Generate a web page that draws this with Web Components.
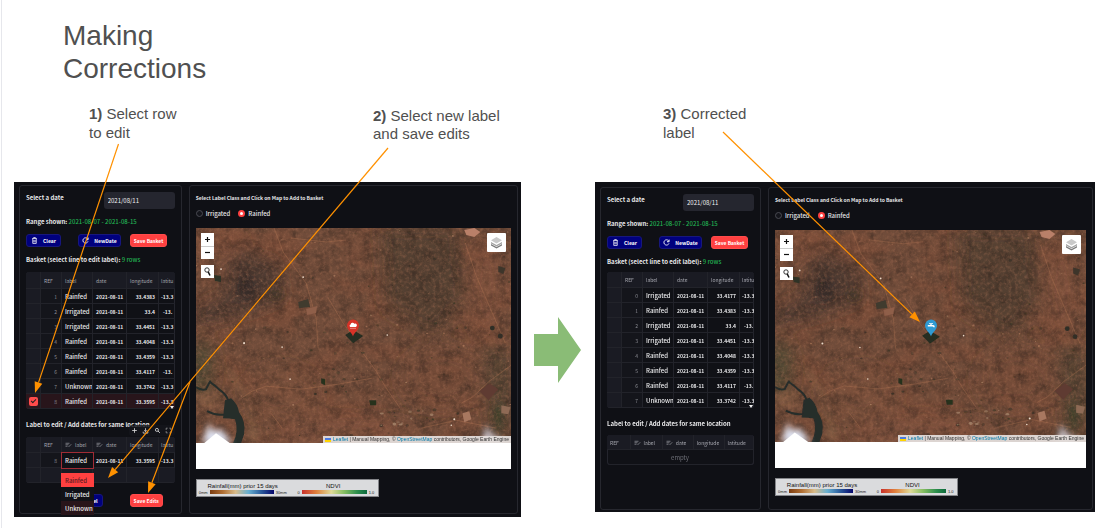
<!DOCTYPE html>
<html lang="en">
<head>
<meta charset="utf-8">
<title>Making Corrections</title>
<style>
  body { margin: 0; background: #fff; font-family: "Liberation Sans", Arial, sans-serif; }
</style>
</head>
<body>
<slide-page>
  <span slot="title">Making Corrections</span>
  <slide-note slot="notes"><b>1)</b> <span>Select row</span><br><span>to edit</span></slide-note>
  <slide-note slot="notes" class="low"><b>2)</b> <span>Select new label</span><br><span>and save edits</span></slide-note>
  <slide-note slot="notes"><b>3)</b> <span>Corrected</span><br><span>label</span></slide-note>
  <label-app slot="before" mode="edit"></label-app>
  <label-app slot="after" mode="done"></label-app>
</slide-page>

<script>
function define(name, render) {
  customElements.define(name, class extends HTMLElement {
    connectedCallback() {
      if (this.shadowRoot) return;
      const t = document.createElement('template');
      t.innerHTML = render(this);
      this.attachShadow({ mode: 'open' }).appendChild(t.content.cloneNode(true));
    }
  });
}

/* ---------- slide ---------- */
define('slide-page', () => `
<style>
  :host { display: block; position: relative; box-sizing: border-box; min-height: 100vh; border-left: 1px solid #fff; box-shadow: inset 1px 0 #e6e7ec; color: #555; }
  h1 { margin: 0; padding: 19px 0 19px 62px; font-size: 28px; line-height: 33px; font-weight: 400; color: #505050; }
  h1 span { display: block; max-width: 200px; }
  .notes { display: grid; grid-template-columns: 284fr 290fr 442fr; padding-left: 88px; height: 78px; }
  .stage { display: grid; grid-template-columns: 507fr 74fr 500fr; padding: 0 10px 0 13px; align-items: start; }
  .flow { align-self: center; padding: 0 14px 0 13px; }
  .flow svg { display: block; width: 100%; }
  ::slotted(.low) { margin-top: 3px; }
</style>
<h1><span><slot name="title"></slot></span></h1>
<div class="notes"><slot name="notes"></slot></div>
<div class="stage">
  <slot name="before"></slot>
  <div class="flow"><svg viewBox="0 0 47 66" aria-hidden="true"><path d="M0 17H24V0L47 33L24 66V49H0Z" fill="#8abc76"/></svg></div>
  <slot name="after"></slot>
</div>
<callout-lines></callout-lines>`);

define('slide-note', () => `
<style>
  :host { display: block; font-size: 15px; line-height: 19px; color: #505050; white-space: nowrap; }
  :host(.low) { line-height: 18px; }
</style>
<slot></slot>`);

define('callout-lines', () => {
  const arrow = (x1, y1, x2, y2) => {
    const a = Math.atan2(y2 - y1, x2 - x1), L = 11, W = 4;
    const bx = x2 - L * Math.cos(a), by = y2 - L * Math.sin(a);
    const sx = W * Math.sin(a), sy = -W * Math.cos(a);
    return `<path d="M${x1} ${y1}L${bx} ${by}" stroke="#ff9100" stroke-width="1.2"/>
      <path d="M${x2} ${y2}L${bx + sx} ${by + sy}L${bx - sx} ${by - sy}Z" fill="#ff9100"/>`;
  };
  return `
<style>
  :host { display: block; position: absolute; inset: 0; pointer-events: none; z-index: 5; margin-left: -1px; }
  svg { display: block; width: 100%; }
</style>
<svg viewBox="0 0 1105 528" aria-hidden="true">
  ${arrow(118.5, 144, 35, 393)}${arrow(388, 148, 108, 478)}${arrow(190, 382, 148, 493)}${arrow(723, 132, 920, 322)}
</svg>`;
});

/* ---------- application ---------- */
define('label-app', el => {
  const edit = el.getAttribute('mode') === 'edit';
  return `
<style>
  :host { display: grid; grid-template-columns: ${edit ? '163fr 330fr' : '161fr 325fr'}; gap: 7px; box-sizing: border-box;
    padding: ${edit ? '3px 3px 3px 5px' : '5px 2px 2px 5px'}; background: #0f1015; color: #e8e8ea;
    font-family: "Noto Sans CJK SC", "Noto Sans CJK JP", sans-serif; font-size: 6px; line-height: 9px; }
  .card { border: 1px solid #26272e; border-radius: 3px; padding: 6px; min-width: 0; }
  .date { display: flex; justify-content: space-between; align-items: flex-start; font-weight: 700; }
  .date label { padding-top: 1px; }
  .date input { width: 71px; height: 17px; box-sizing: border-box; border: 0; border-radius: 3px; padding: 0 4px;
    background: #25262f; color: #f0f0f2; font: 6px/9px "Noto Sans CJK SC", sans-serif; }
  p { margin: 8px 0 0; white-space: nowrap; font-weight: 700; }
  p span { color: #22b152; font-weight: 500; }
  .row { display: flex; margin-top: 8px; }
  .row app-button + app-button { margin-left: 17px; }
  .row app-button.save { margin-left: 9px; }
  basket-table { margin-top: ${edit ? 8 : 6}px; }
  .same { margin-top: 11px; }
  .edit { position: relative; }
  .edit .row { margin-top: 11px; justify-content: flex-end; padding-right: 12px; }
  .edit .row .save { margin-left: 27px; }
</style>
<section class="card">
  <div class="date"><label for="d">Select a date</label><input id="d" value="2021/08/11"></div>
  <p>Range shown: <span>2021-08-07 - 2021-08-15</span></p>
  <div class="row"><app-button icon="trash" wide="35">Clear</app-button><app-button icon="reload" wide="43">NewDate</app-button><app-button kind="red" wide="37" class="save">Save Basket</app-button></div>
  <p>Basket (select line to edit label): <span>9 rows</span></p>
  <basket-table mode="${edit ? 'edit' : 'done'}"></basket-table>
  <div class="edit">
    <p class="same">Label to edit / Add dates for same location</p>
    <edit-table mode="${edit ? 'edit' : 'done'}"></edit-table>
    ${edit ? `<div class="row"><app-button wide="28" class="end">Cancel</app-button><app-button kind="red" wide="33" class="save">Save Edits</app-button></div>` : ''}
  </div>
</section>
<map-panel class="card" pin="${edit ? 'rain' : 'tap'}"></map-panel>`;
});

define('app-button', el => {
  const icons = {
    trash: '<svg viewBox="0 0 12 12"><path d="M2 2.5H10M4.5 2.3V1H7.500V2.300M3 3V11H9V3M5 5V9M7 5V9" fill="none" stroke="#fff" stroke-width="1.300"/></svg>',
    reload: '<svg viewBox="0 0 12 12"><path d="M10.300 7.500A4.500 4.500 0 1 1 9.500 3L7.500 4.700M10.500 1V4.700H7" fill="none" stroke="#fff" stroke-width="1.500"/></svg>'
  };
  const red = el.getAttribute('kind') === 'red';
  return `
<style>
  :host { display: block; flex: none; width: ${el.getAttribute('wide')}px; }
  button { display: flex; align-items: center; justify-content: center; gap: 5px; width: 100%; height: 13px; padding: 0;
    border: 1px solid ${red ? '#ff4b4b' : '#17177c'}; border-radius: 3px; background: ${red ? '#ff4040' : '#00007e'}; color: #fff;
    font: 700 5px/9px "Noto Sans CJK SC", sans-serif; white-space: nowrap; }
  :host(.end) button { justify-content: flex-end; padding-right: 4px; }
  svg { width: 7px; height: 7px; }
</style>
<button type="button">${icons[el.getAttribute('icon')] || ''}<slot></slot></button>`;
});

const tableCss = `
  :host { display: block; position: relative; }
  .frame { overflow: hidden; border-radius: 3px; box-shadow: inset 0 0 0 1px #24252d; background: #101116; }
  table { table-layout: fixed; border-collapse: separate; border-spacing: 0; font-size: 5px; line-height: 9px; }
  th, td { box-sizing: border-box; height: 15px; padding: 0 3px; border-right: 1px solid #22232a; border-bottom: 1px solid #22232a;
    text-align: left; font-weight: 700; white-space: nowrap; overflow: hidden; }
  th { font-weight: 400; font-size: 5px; color: #a4a5ad; background: #1a1b23; }
  td.sel { background: #1a1b23; padding: 0; }
  td.ref { text-align: right; color: #8a8b92; font-weight: 400; background: #14151b; padding-right: 4px; }
  td.num { text-align: right; }
  td.word { font-size: 6px; font-weight: 500; }
  th.lat, td.lat { padding: 0 0 0 2px; }
  td.lat.short { padding-left: 4px; }
  th svg { width: 7px; height: 6px; vertical-align: -1px; margin-right: 3px; }`;
const cols = '<colgroup><col style="width:15px"><col style="width:21px"><col style="width:31px"><col style="width:34px"><col style="width:32px"><col style="width:17px"></colgroup>';
const pencil = '<svg viewBox="0 0 14 12"><path d="M1 2.500H9M1 5.500H7M1 8.500H5M7 10L12.500 4.500" stroke="#9a9ba2" stroke-width="1.400" fill="none"/></svg>';

define('basket-table', el => {
  const edit = el.getAttribute('mode') === 'edit';
  const all = [
    [0, 'Irrigated', '33.4177', 0], [1, 'Rainfed', '33.4383', 0], [2, 'Irrigated', '33.4', 1], [3, 'Irrigated', '33.4451', 0],
    [4, 'Rainfed', '33.4048', 0], [5, 'Rainfed', '33.4359', 0], [6, 'Rainfed', '33.4117', 1], [7, 'Unknown', '33.3742', 0],
    [8, 'Rainfed', '33.3595', 0]
  ];
  const rows = edit ? all.slice(1) : all.slice(0, 8);
  return `
<style>${tableCss}
  table { width: 150px; }
  thead th { height: ${edit ? 17 : 16}px; }
  tr.on td { background: #28151b; }
  tr.on td.sel { background: #2c171d; }
  input { appearance: none; display: block; position: relative; margin: 0 0 0 3px; width: 9px; height: 9px; border-radius: 2px; background: #ff4b4b; }
  input::after { content: ""; display: block; position: absolute; left: 2px; top: 2px; width: 4px; height: 2px; border: solid #222; border-width: 0 0 1px 1px; transform: rotate(-45deg); }
  .grip { position: absolute; right: 1px; bottom: 0; width: 4px; height: 4px; }
</style>
<div class="frame"><table>${cols}
<thead><tr><th></th><th>REF</th><th>label</th><th>date</th><th>longitude</th><th class="lat">latitu</th></tr></thead>
<tbody>${rows.map(r => `<tr${r[0] === 8 ? ' class="on"' : ''}><td class="sel">${r[0] === 8 ? '<input type="checkbox" checked aria-label="Select row 8">' : ''}</td><td class="ref">${r[0]}</td><td class="word">${r[1]}</td><td>2021-08-11</td><td class="num">${r[2]}</td><td class="lat${r[3] ? ' short' : ''}">${r[3] ? '-13.' : '-13.3'}</td></tr>`).join('')}</tbody>
</table></div><svg class="grip" viewBox="0 0 4 4"><path d="M0 1H4L2 4Z" fill="#eee"/></svg>`;
});

define('edit-table', el => {
  const edit = el.getAttribute('mode') === 'edit';
  if (!edit) return `
<style>${tableCss}
  :host { margin-top: 7px; }
  table { width: 100%; }
  td.empty { text-align: center; color: #6f7078; font-weight: 400; font-size: 6px; }
</style>
<div class="frame"><table><colgroup><col style="width:16%"><col style="width:22%"><col style="width:21%"><col style="width:21%"><col style="width:20%"></colgroup>
<thead><tr><th>REF</th><th>${pencil}label</th><th>${pencil}date</th><th>longitude</th><th>latitude</th></tr></thead>
<tbody><tr><td class="empty" colspan="5">empty</td></tr></tbody></table></div>`;
  return `
<style>${tableCss}
  :host { margin-top: 8px; }
  table { width: 150px; }
  thead th { height: 16px; }
  tr.blank td { background: #1a1b23; }
  .tools { position: absolute; right: 0; top: -12px; display: flex; justify-content: space-around; align-items: center; width: 46px; height: 11px; border-radius: 3px; background: #14151ccc; }
  .tools button { width: 7px; height: 7px; padding: 0; border: 0; background: none; display: flex; }
  .tools svg { width: 7px; height: 7px; }
  .cell { position: absolute; left: 35px; top: 15px; width: 33px; height: 17px; box-sizing: border-box; border: 1px solid #a12c35; background: #101116; color: #eee; font: 500 6px/9px "Noto Sans CJK SC", sans-serif; text-align: left; padding: 0 3px; }
  .menu { position: absolute; z-index: 2; left: 35px; top: 36px; width: 33px; margin: 0; padding: 0; background: #111217; }
  .menu button { display: block; width: 100%; height: 14px; border: 0; padding: 0 4px; text-align: left; background: #111217; color: #eee; font: 500 6px/9px "Noto Sans CJK SC", sans-serif; }
  .menu button:first-child { background: #ff4040; color: #571a20; }
  .menu button:last-child { background: #28151a; }
</style>
<div class="frame"><table>${cols}
<thead><tr><th></th><th>REF</th><th>${pencil}label</th><th>${pencil}date</th><th>longitude</th><th class="lat">latitu</th></tr></thead>
<tbody><tr><td class="sel"></td><td class="ref">8</td><td></td><td>2021-08-11</td><td class="num">33.3595</td><td class="lat">-13.3</td></tr>
<tr class="blank"><td></td><td></td><td></td><td></td><td></td><td></td></tr></tbody></table></div>
<div class="tools">
  <button type="button" aria-label="Add row"><svg viewBox="0 0 12 12"><path d="M6 2V10M2 6H10" stroke="#ddd" stroke-width="1.400"/></svg></button>
  <button type="button" aria-label="Download"><svg viewBox="0 0 12 12"><path d="M6 2V8M3.500 5.500L6 8L8.500 5.500M2 8V10.500H10V8" fill="none" stroke="#ddd" stroke-width="1.300"/></svg></button>
  <button type="button" aria-label="Search"><svg viewBox="0 0 12 12"><circle cx="5" cy="5" r="2.600" fill="none" stroke="#ddd" stroke-width="1.400"/><path d="M7 7L10 10" stroke="#ddd" stroke-width="1.600"/></svg></button>
  <button type="button" aria-label="Fullscreen"><svg viewBox="0 0 12 12"><path d="M2 5V2H4.500M7.500 2H10V5M10 7V10H7.500M4.500 10H2V7" fill="none" stroke="#999" stroke-width="1.300"/></svg></button>
</div>
<button type="button" class="cell" aria-haspopup="listbox">Rainfed</button>
<div class="menu"><button type="button">Rainfed</button><button type="button">Irrigated</button><button type="button">Unknown</button></div>`;
});

define('map-panel', el => `
<style>
  :host { display: block; min-width: 0; }
  h2 { margin: 1px 0 0; font-size: 5px; line-height: 9px; font-weight: 700; }
  .opts { display: flex; gap: 8px; margin-top: 6px; font-size: 6px; font-weight: 500; }
  label { display: flex; align-items: center; gap: 3px; height: 10px; }
  input { appearance: none; margin: 0; width: 7px; height: 7px; box-sizing: border-box; border-radius: 50%; border: 1px solid #4a4b52; background: #14151b; }
  input:checked { border: 2px solid #ff4040; background: #fff; }
  satellite-map { margin-top: 10px; }
  .strip { height: 26px; background: #fff; }
  map-legend { margin: 10px 0 7px; }
</style>
<h2>Select Label Class and Click on Map to Add to Basket</h2>
<div class="opts"><label><input type="radio" name="c">Irrigated</label><label><input type="radio" name="c" checked>Rainfed</label></div>
<satellite-map pin="${el.getAttribute('pin')}"></satellite-map>
<div class="strip"></div>
<map-legend></map-legend>`);

/* Deterministic scatter of bright settlements and dark field patches */
function scatter(n, seed, x0, y0, w, h, fills, max) {
  let s = seed, out = '';
  const rnd = () => (s = (s * 16807) % 2147483647) / 2147483647;
  for (let i = 0; i < n; i++) {
    const x = (x0 + rnd() * w).toFixed(1), y = (y0 + rnd() * h).toFixed(1), r = (0.4 + rnd() * max).toFixed(1);
    out += `<ellipse cx="${x}" cy="${y}" rx="${r}" ry="${(r * (0.5 + rnd() * .5)).toFixed(1)}" fill="${fills[Math.floor(rnd() * fills.length)]}" opacity="${(0.25 + rnd() * .4).toFixed(2)}"/>`;
  }
  return out;
}

define('satellite-map', el => {
  const rain = el.getAttribute('pin') === 'rain';
  const glyph = rain
    ? '<path d="M4.200 8A1.500 1.500 0 0 1 4.600 5.400A2 2 0 0 1 8.300 4.700A1.800 1.800 0 0 1 9.800 8Z" fill="#fff"/><path d="M5 8.800V9.800M7 8.800V9.800M9 8.800V9.800" stroke="#fff" stroke-width=".8"/>'
    : '<path d="M3.800 6H6.300V5H5V4.200H9V5H7.700V6H9.200Q10.800 6 10.800 8.200H9.400Q9.300 7.500 8.700 7.500H3.800Z" fill="#fff"/>';
  return `
<style>
  :host { display: block; position: relative; line-height: 7px; }
  .land { display: block; width: 100%; aspect-ratio: 315 / 215; background: #68483a; }
  button { display: flex; align-items: center; justify-content: center; width: 13px; height: 13px; padding: 0; border: 0; background: #fff; color: #111; }
  button svg { width: 9px; height: 9px; }
  .zoom { position: absolute; left: 5px; top: 5px; background: #ccc; }
  .zoom button + button { box-shadow: inset 0 1px #ccc; }
  .find { position: absolute; left: 5px; top: 37px; }
  .layers { position: absolute; right: 5px; top: 5px; width: 19px; height: 19px; border-radius: 1px; }
  .layers svg { width: 13px; height: 13px; }
  .pin { position: absolute; left: 50%; top: 50%; width: 14px; height: 18px; margin: -17px 0 0 -7px; }
  .credit { position: absolute; right: 0; bottom: 0; display: flex; align-items: center; height: 7px; padding: 0 2px; background: #e4dfddee; color: #333; font: 5px/7px "Liberation Sans", Arial, sans-serif; white-space: pre; }
  .credit svg { width: 6px; height: 4px; margin-right: 2px; }
  a { color: #0078a8; text-decoration: none; }
</style>
<svg class="land" viewBox="0 0 315 215" preserveAspectRatio="none" aria-label="Satellite image">
  <defs>
    <filter id="dark" x="0" y="0" width="100%" height="100%" color-interpolation-filters="sRGB"><feTurbulence type="fractalNoise" baseFrequency=".09" numOctaves="6" seed="4"/><feColorMatrix values="0 0 0 0 .16  0 0 0 0 .12  0 0 0 0 .1  0 0 2 0 -.8"/></filter>
    <filter id="lite" x="0" y="0" width="100%" height="100%" color-interpolation-filters="sRGB"><feTurbulence type="fractalNoise" baseFrequency=".3" numOctaves="4" seed="11"/><feColorMatrix values="0 0 0 0 .68  0 0 0 0 .45  0 0 0 0 .34  0 2 0 0 -.85"/></filter>
    <filter id="big" x="0" y="0" width="100%" height="100%" color-interpolation-filters="sRGB"><feTurbulence type="fractalNoise" baseFrequency=".02 .03" numOctaves="4" seed="8"/><feColorMatrix values="0 0 0 0 .54  0 0 0 0 .31  0 0 0 0 .22  3 0 0 0 -1.300"/></filter>
    <filter id="b8" x="-60%" y="-60%" width="220%" height="220%"><feGaussianBlur stdDeviation="8"/></filter>
    <filter id="b3" x="-60%" y="-60%" width="220%" height="220%"><feGaussianBlur stdDeviation="3"/></filter>
    <filter id="b1" x="-30%" y="-30%" width="160%" height="160%"><feGaussianBlur stdDeviation=".6"/></filter>
  </defs>
  <rect width="315" height="215" fill="#704c3a"/>
  <rect width="315" height="215" filter="url(#big)" opacity=".4"/>
  <g filter="url(#b8)">
    <path d="M185 0H262L268 70L240 110L190 80Z" fill="#4a3d2c" opacity=".7"/>
    <path d="M36 20L80 35L88 70L50 84L0 98V80L30 68Z" fill="#40342e" opacity=".7"/>
    <ellipse cx="20" cy="15" rx="26" ry="12" fill="#84513d" opacity=".6"/>
    <ellipse cx="150" cy="205" rx="70" ry="14" fill="#88553f" opacity=".6"/>
    <ellipse cx="85" cy="165" rx="36" ry="26" fill="#7f523e" opacity=".6"/>
    <ellipse cx="245" cy="150" rx="40" ry="30" fill="#764b37" opacity=".6"/>
    <ellipse cx="290" cy="60" rx="18" ry="50" fill="#85513b" opacity=".6"/>
    <ellipse cx="5" cy="140" rx="12" ry="28" fill="#4e4a34" opacity=".9"/>
    <path d="M288 120H315V215H297Z" fill="#4b4433" opacity=".7"/>
  </g>
  <g filter="url(#b3)">
    <ellipse cx="50" cy="60" rx="9" ry="13" fill="#2b2828" opacity=".6"/>
    <ellipse cx="80" cy="66" rx="8" ry="5" fill="#343326" opacity=".5"/>
    <ellipse cx="14" cy="172" rx="12" ry="8" fill="#a06e50" opacity=".5"/>
    <path d="M20 130L38 155L52 175L54 213H62L52 172L35 143Z" fill="#8c6a4b" opacity=".6"/>
    <ellipse cx="302" cy="188" rx="5" ry="14" fill="#39402b" opacity=".7"/>
  </g>
  <rect width="315" height="215" filter="url(#dark)" opacity=".45"/>
  <rect width="315" height="215" filter="url(#lite)" opacity=".42"/>
  <g fill="none" stroke="#b17553" stroke-width=".7" opacity=".55" filter="url(#b1)">
    <path d="M269 15L280 48L296 85L309 115"/><path d="M78 0L87 24L110 55L120 90L122 120M132 70L147 95L155 106"/>
    <path d="M45 170L56 163L70 158L105 161L142 156L176 150"/><path d="M166 124L180 143L190 160L204 180"/><path d="M315 137L293 153L276 169L265 175"/>
    <path d="M95 10L130 14L150 12M225 200L260 192L300 200M75 185L86 200"/>
  </g>
  <g filter="url(#b1)">
    ${scatter(80, 77, 0, 0, 315, 210, ['#2b2a20', '#33291f', '#2e3222'], 1.3)}
    ${scatter(75, 123, 0, 0, 315, 210, ['#c58a68', '#b48464', '#c49b77'], .7)}
    ${scatter(20, 51, 118, 120, 75, 50, ['#242a1f', '#2c2f22'], 1.8)}
    ${scatter(26, 91, 185, 180, 60, 18, ['#293020', '#2b2a20', '#b5967a'], 1.6)}
    <path d="M102 74L112 71L114 79L103 80Z" fill="#403a2f"/><path d="M110 81L121 78L120 85L111 87Z" fill="#8f5e49"/>
    <path d="M18 47L25 48L25 54L19 53Z" fill="#2e3325"/><path d="M302 38L309 40L307 46L302 44Z" fill="#3e352c"/>
    <circle cx="296" cy="100" r="2.400" fill="#2f2f25"/><circle cx="304" cy="108" r="2.500" fill="#332f27"/>
    <path d="M173 172L180 172L180 177L174 177Z" fill="#26301f"/><path d="M125 150L129 151L129 157L125 155Z" fill="#28301f"/>
    <path d="M266 185L273 183L275 191L268 194Z" fill="#a87860"/><path d="M305 177L314 179L312 186L305 185Z" fill="#8e6b55"/>
    <path d="M268 2L278 0L284 4L278 9L270 7Z" fill="#b98069"/><path d="M283 163L293 155L302 161L292 172Z" fill="#5e3b31"/>
    <path d="M149 107L157 102L167 108L157 115Z" fill="#252d20"/>
    <path d="M0 159Q6 163 10 161Q15 151 14 154Q20 158 24 162Q30 166 32 172M11 183Q20 188 30 186" fill="none" stroke="#262d2a" stroke-width="2"/>
    <path d="M29 172L35 170Q42 176 43 184Q50 193 48 206L45 215H37Q43 203 39 191Q34 190 27 190Q28 180 29 172Z" fill="#262d2a"/>
  </g>
  <g fill="#ecdac9"><circle cx="25" cy="41" r=".9"/><circle cx="107" cy="49" r=".9"/><circle cx="48" cy="115" r="1"/><circle cx="86" cy="119" r=".8"/><circle cx="191" cy="107" r=".8"/><circle cx="258" cy="191" r="1"/><circle cx="255" cy="197" r=".8"/><circle cx="94" cy="151" r=".8"/></g>
  <g filter="url(#b3)"><path d="M6 215L13 195L17 203L25 201L36 215Z" fill="#dfe3f2"/><path d="M285 215L290 197L296 206L306 212V215Z" fill="#d8d9e6" opacity=".8"/></g>
  <path d="M8 215L20 205L34 215Z" fill="#fff" filter="url(#b1)"/>
</svg>
<div class="zoom"><button type="button" aria-label="Zoom in"><svg viewBox="0 0 9 9"><path d="M4.500 2V7M2 4.500H7" stroke="#111" stroke-width="1.200"/></svg></button><button type="button" aria-label="Zoom out"><svg viewBox="0 0 9 9"><path d="M2 4.500H7" stroke="#111" stroke-width="1.200"/></svg></button></div>
<button type="button" class="find" aria-label="Search"><svg viewBox="0 0 9 9"><circle cx="4" cy="3" r="2.200" fill="none" stroke="#222" stroke-width=".9"/><path d="M5.200 4.800L7 8.500" stroke="#111" stroke-width="1.500"/></svg></button>
<button type="button" class="layers" aria-label="Layers"><svg viewBox="0 0 26 26"><path d="M2 16L13 22L24 16V19L13 25L2 19Z" fill="#7b7b7b"/><path d="M2 12L13 18L24 12V15L13 21L2 15Z" fill="#a2a2a2"/><path d="M13 2L24 8.500L13 15L2 8.500Z" fill="#c9c9c9"/></svg></button>
<svg class="pin" viewBox="0 0 14 18" aria-hidden="true"><path d="M7 17.500C6 13.500 1 11 1 6.500A6 6 0 0 1 13 6.500C13 11 8 13.500 7 17.500Z" fill="${rain ? '#d63328' : '#2f9ad3'}"/>${glyph}</svg>
<div class="credit"><svg viewBox="0 0 6 4"><path d="M0 0H6V2H0Z" fill="#4c7be1"/><path d="M0 2H6V4H0Z" fill="#ffd500"/></svg><a href="#">Leaflet</a> | Manual Mapping, © <a href="#">OpenStreetMap</a> contributors, Google Earth Engine</div>`;
});

define('map-legend', () => `
<style>
  :host { display: grid; grid-template-columns: 10px 64px 12px 10px 65px 8px; column-gap: 2px; justify-content: start; align-content: start; box-sizing: border-box; width: 183px; height: 18px; padding: 2px 1px 0;
    border: 1px solid #85868a; background: #dadbdd; color: #222; font: 4px/5px "Liberation Sans", Arial, sans-serif; }
  b { font-size: 6px; line-height: 8px; font-weight: 400; text-align: center; white-space: nowrap; justify-self: center; color: #111; }
  .a { grid-column: 1 / 4; } .c { grid-column: 4 / 7; }
  i { height: 4px; }
  .rain { background: linear-gradient(90deg, #7b3d12, #b06f34 20%, #d8bc8b 40%, #67afd0 60%, #2a5b9c 80%, #06066b); }
  .ndvi { background: linear-gradient(90deg, #c8322c, #e0803c 22%, #dfda98 45%, #84bd61 65%, #2c8d4c 85%, #0d6a3c); }
  .r { text-align: right; }
</style>
<b class="a">Rainfall(mm) prior 15 days</b><b class="c">NDVI</b>
<span class="r">0mm</span><i class="rain"></i><span>30mm</span><span class="r">0</span><i class="ndvi"></i><span>1.0</span>`);
</script>
</body>
</html>
